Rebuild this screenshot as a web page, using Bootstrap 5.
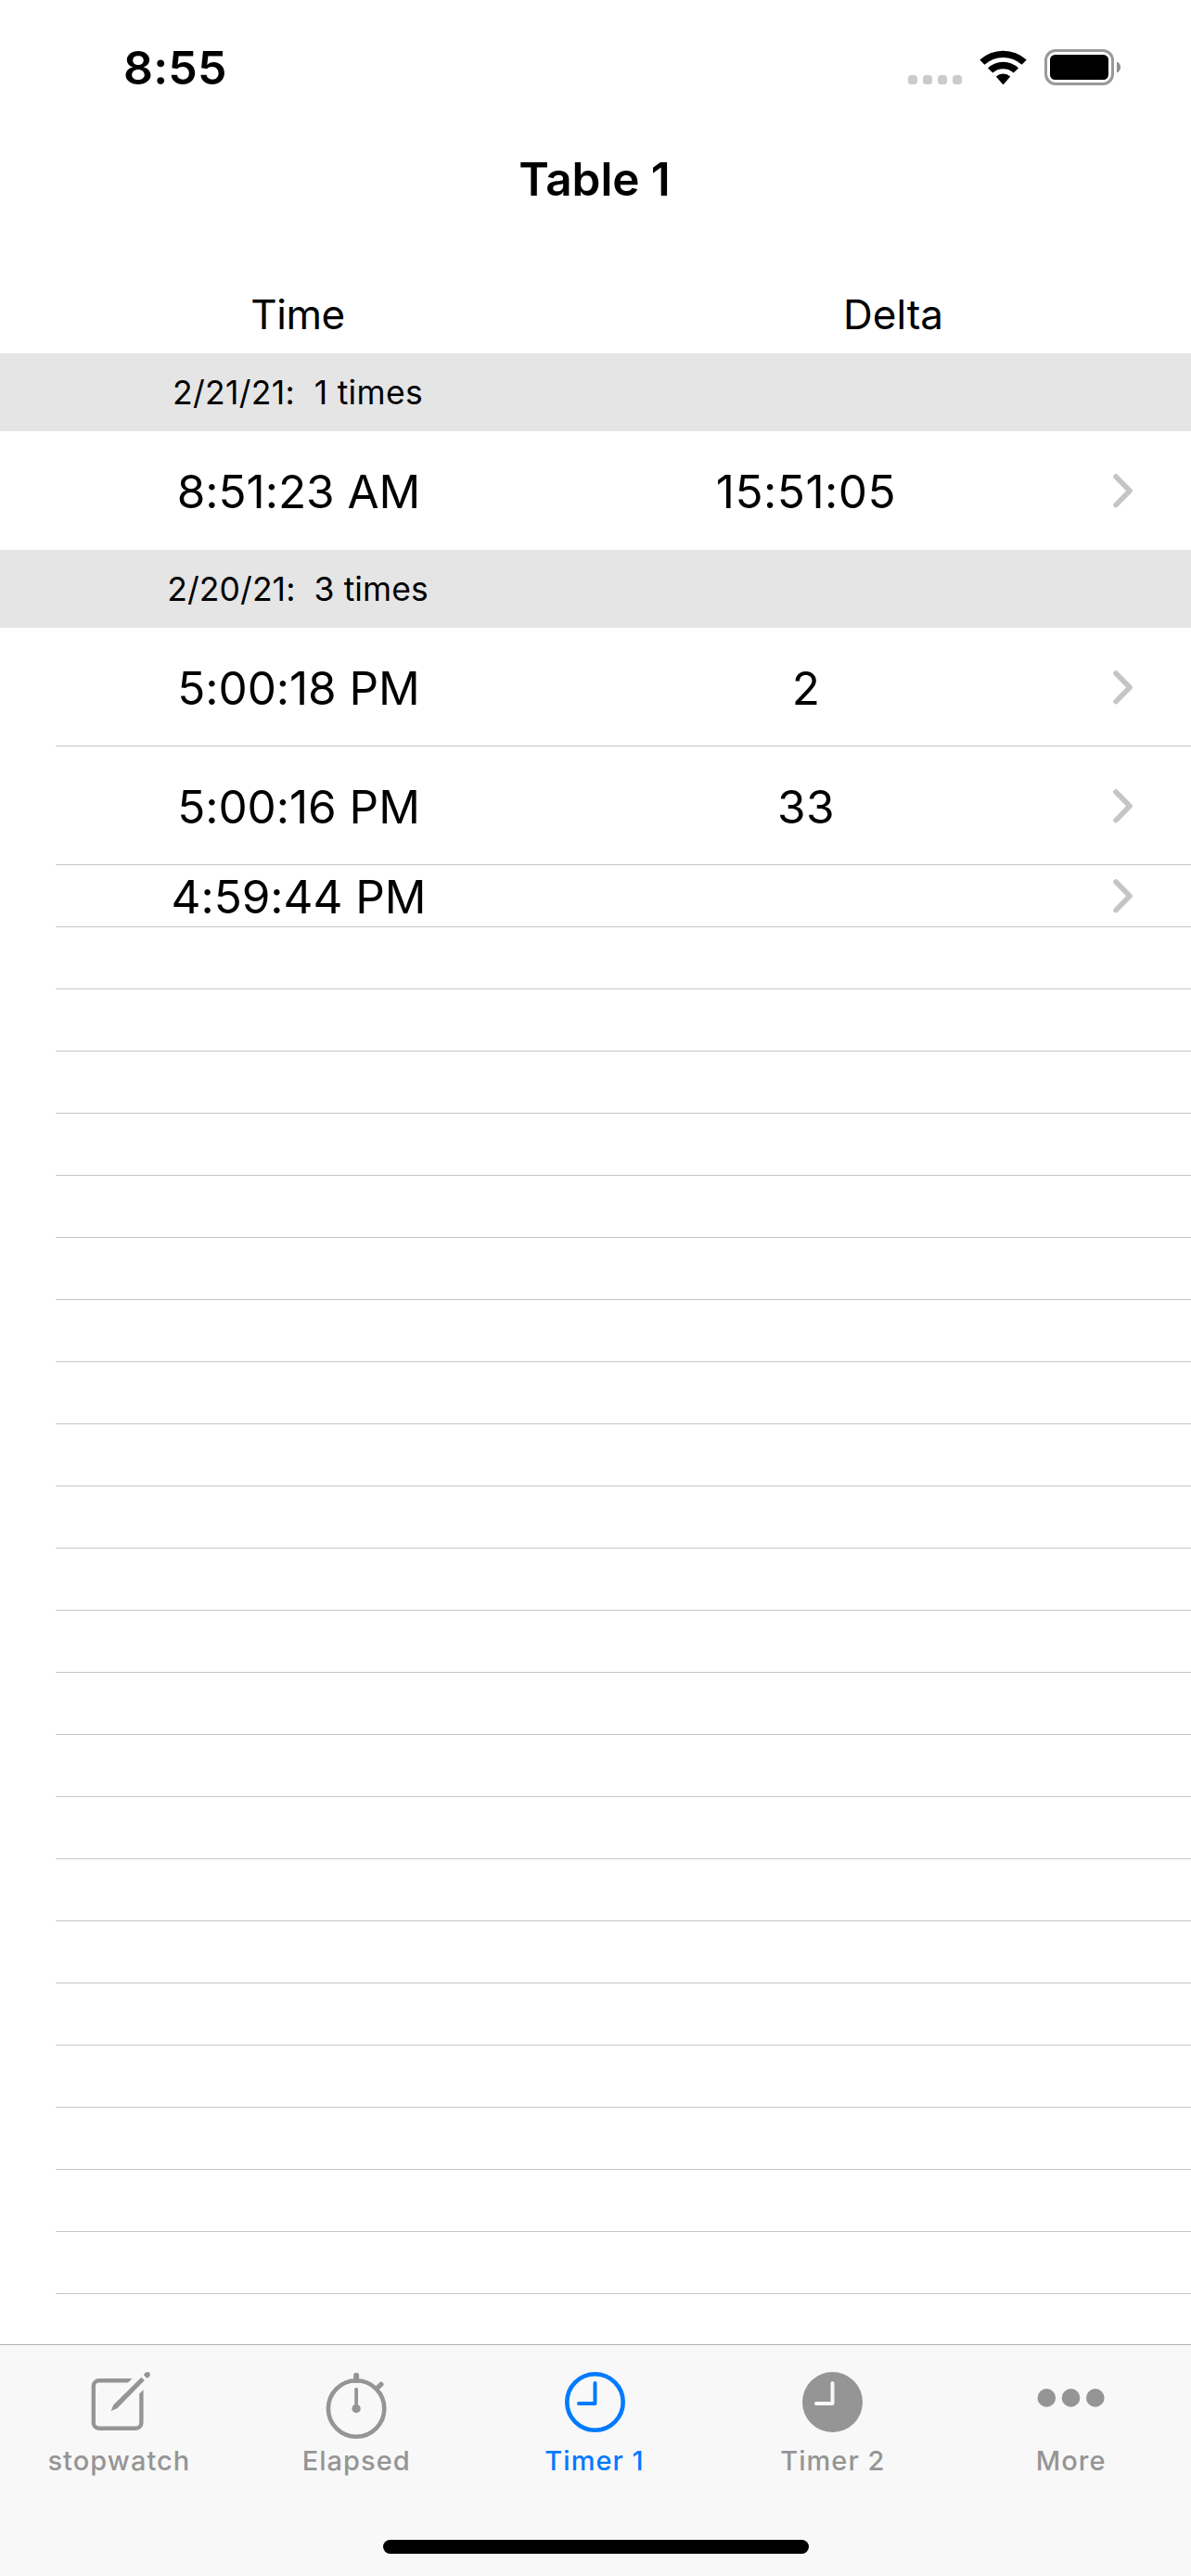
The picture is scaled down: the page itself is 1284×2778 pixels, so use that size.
<!DOCTYPE html>
<html lang="en">
<head>
<meta charset="utf-8">
<meta name="viewport" content="width=device-width, initial-scale=1">
<title>Table 1</title>
<link href="https://cdn.jsdelivr.net/npm/bootstrap@5.3.0/dist/css/bootstrap.min.css" rel="stylesheet">
<style>
  body { font-family: Inter, "Liberation Sans", sans-serif; color: #000; background: #fff; }
  svg { display: block; flex: none; }
  .app-screen { width: 1284px; height: 2778px; }
  .status-bar { height: 132px; padding: 14px 76px 0 133px; }
  .clock-text { font-size: 50px; font-weight: 600; letter-spacing: .2px; }
  .status-icons { margin-top: -3px; }
  .title-bar { height: 132px; padding: 0 2px 10px 0; font-size: 49.5px; font-weight: 600; letter-spacing: -.1px; }
  .column-heads { height: 117px; padding-top: 33px; font-size: 44px; }
  .head-time { letter-spacing: -.5px; }
  .day-band { height: 84px; padding-top: 2px; background: #e5e5e5; font-size: 35.5px; letter-spacing: .3px; white-space: pre; }
  .day-band.snug { letter-spacing: .08px; }
  .time-row { height: 128px; font-size: 49.5px; }
  .time-row.short-row { height: 67px; }
  .time-cell, .delta-cell { padding-top: 2px; }
  .time-cell { padding-left: 2px; letter-spacing: -.05px; }
  .delta-cell { width: 454px; letter-spacing: .5px; }
  .chevron { margin-left: 104px; }
  .ruled { background: linear-gradient(#c6c6c8, #c6c6c8) 60px 100% / 1224px 1px no-repeat; }
  .blank-row { height: 67px; }
  .tab-panel { height: 250px; background: #f8f8f8; border-top: 1px solid #b2b2b2; padding: 27px 0 24px; }
  .tab-link { color: #959595; font-size: 29px; font-weight: 500; letter-spacing: 1.05px; line-height: 36px; }
  .tab-link.active { color: #007aff; }
  .tab-link span { margin: 8px 2px 0 0; }
  .tab-link:first-child span { margin-right: 0; }
  .home-pill { width: 459px; height: 15px; background: #000; }
</style>
<script src="https://cdn.jsdelivr.net/npm/bootstrap@5.3.0/dist/js/bootstrap.bundle.min.js"></script>
</head>
<body>
<svg width="0" height="0" class="position-absolute" aria-hidden="true">
  <symbol id="chev" viewBox="0 0 22 37"><path d="M3 3 L18 18.3 L3 33.6" fill="none" stroke="#c5c5c7" stroke-width="5.6" stroke-linecap="round" stroke-linejoin="round"/></symbol>
</svg>
<div class="app-screen d-flex flex-column overflow-hidden">

  <header>
    <div class="status-bar d-flex align-items-center justify-content-between">
      <span class="clock-text lh-1">8:55</span>
      <svg class="status-icons" width="230" height="44" viewBox="978 50 230 44" aria-hidden="true">
        <g fill="#cbcbcb">
          <rect x="979" y="81" width="10" height="10" rx="3.5"/>
          <rect x="995" y="81" width="10" height="10" rx="3.5"/>
          <rect x="1011" y="81" width="10" height="10" rx="3.5"/>
          <rect x="1027" y="81" width="10" height="10" rx="3.5"/>
        </g>
        <path d="M1056.3 64.6 A37 37 0 0 1 1106.7 64.6 L1101.6 69.7 A30 30 0 0 0 1061.4 69.7 Z"/>
        <path d="M1065 73.4 A24 24 0 0 1 1098 73.4 L1092.7 78.6 A16.5 16.5 0 0 0 1070.3 78.6 Z"/>
        <path d="M1073.8 82.4 A12 12 0 0 1 1089.2 82.4 L1082.6 90.2 Q1081.5 91.6 1080.4 90.2 Z"/>
        <rect x="1127.5" y="54.5" width="72" height="36" rx="10.5" fill="none" stroke="#999" stroke-width="3"/>
        <rect x="1132" y="59" width="63" height="27" rx="5.5"/>
        <path d="M1204 66.5 Q1208 68.3 1208 72.5 Q1208 76.7 1204 78.5 Z" fill="#8e8e8e"/>
      </svg>
    </div>
    <div class="title-bar d-flex align-items-center justify-content-center">Table 1</div>
    <div class="column-heads d-flex align-items-center text-center">
      <span class="w-50 head-time">Time</span>
      <span class="w-50">Delta</span>
    </div>
  </header>

  <main class="flex-grow-1">
    <section>
      <div class="day-band d-flex align-items-center"><span class="w-50 text-center">2/21/21:  1 times</span></div>
      <div class="time-row d-flex align-items-center text-center">
        <span class="time-cell w-50">8:51:23 AM</span><span class="delta-cell">15:51:05</span>
        <svg class="chevron" width="22" height="37"><use href="#chev"/></svg>
      </div>
    </section>
    <section>
      <div class="day-band snug d-flex align-items-center"><span class="w-50 text-center">2/20/21:  3 times</span></div>
      <div class="time-row ruled d-flex align-items-center text-center">
        <span class="time-cell w-50">5:00:18 PM</span><span class="delta-cell">2</span>
        <svg class="chevron" width="22" height="37"><use href="#chev"/></svg>
      </div>
      <div class="time-row ruled d-flex align-items-center text-center">
        <span class="time-cell w-50">5:00:16 PM</span><span class="delta-cell">33</span>
        <svg class="chevron" width="22" height="37"><use href="#chev"/></svg>
      </div>
      <div class="time-row short-row ruled d-flex align-items-center text-center">
        <span class="time-cell w-50">4:59:44 PM</span><span class="delta-cell"></span>
        <svg class="chevron" width="22" height="37"><use href="#chev"/></svg>
      </div>
    </section>
    <div aria-hidden="true">
      <div class="blank-row ruled"></div><div class="blank-row ruled"></div><div class="blank-row ruled"></div>
      <div class="blank-row ruled"></div><div class="blank-row ruled"></div><div class="blank-row ruled"></div>
      <div class="blank-row ruled"></div><div class="blank-row ruled"></div><div class="blank-row ruled"></div>
      <div class="blank-row ruled"></div><div class="blank-row ruled"></div><div class="blank-row ruled"></div>
      <div class="blank-row ruled"></div><div class="blank-row ruled"></div><div class="blank-row ruled"></div>
      <div class="blank-row ruled"></div><div class="blank-row ruled"></div><div class="blank-row ruled"></div>
      <div class="blank-row ruled"></div><div class="blank-row ruled"></div><div class="blank-row ruled"></div>
      <div class="blank-row ruled"></div>
    </div>
  </main>

  <footer class="tab-panel d-flex flex-column align-items-center justify-content-between flex-shrink-0">
    <nav class="nav nav-fill w-100 flex-nowrap">
      <a class="tab-link col d-flex flex-column align-items-center text-decoration-none" href="#">
        <svg width="72" height="72" viewBox="0 0 72 72" aria-hidden="true">
          <rect x="8.8" y="11.2" width="51.6" height="51.6" rx="6" fill="none" stroke="currentColor" stroke-width="4.4"/>
          <path d="M43.6 28 L69.6 2" stroke="#f8f8f8" stroke-width="17.2"/>
          <path d="M27.6 44 L30.3 37.6 L60.3 7.7 L63.9 11.1 L34.3 41.3 Z" fill="currentColor"/>
          <path d="M62.9 5.3 Q64.5 2 67.2 2 Q70.2 2.4 69.9 5.2 Q69.7 7.3 66.3 8.7 Z" fill="currentColor"/>
        </svg>
        <span>stopwatch</span>
      </a>
      <a class="tab-link col d-flex flex-column align-items-center text-decoration-none" href="#">
        <svg width="72" height="72" viewBox="0 0 72 72" fill="none" stroke="currentColor" stroke-linecap="round" class="overflow-visible" aria-hidden="true">
          <circle cx="35.1" cy="41.5" r="30.2" stroke-width="4.6"/>
          <path d="M35.1 5.7 V11" stroke-width="6"/>
          <path d="M57.3 19.6 L61.8 15.4" stroke-width="5.4"/>
          <path d="M35.1 20.6 V40" stroke-width="3.8"/>
          <circle cx="35.1" cy="41.5" r="4.7" fill="currentColor" stroke="none"/>
        </svg>
        <span>Elapsed</span>
      </a>
      <a class="tab-link active col d-flex flex-column align-items-center text-decoration-none" href="#" aria-current="page">
        <svg width="72" height="72" viewBox="0 0 72 72" fill="none" stroke="currentColor" stroke-linecap="round" stroke-linejoin="round" aria-hidden="true">
          <circle cx="35.5" cy="34.5" r="30.2" stroke-width="4.6"/>
          <path d="M35.5 13.9 V36 H18" stroke-width="4"/>
        </svg>
        <span>Timer 1</span>
      </a>
      <a class="tab-link col d-flex flex-column align-items-center text-decoration-none" href="#">
        <svg width="72" height="72" viewBox="0 0 72 72" fill="none" stroke-linecap="round" stroke-linejoin="round" aria-hidden="true">
          <circle cx="34.5" cy="34.5" r="32.5" fill="currentColor"/>
          <path d="M34.5 13.9 V36 H17" stroke="#f8f8f8" stroke-width="4"/>
        </svg>
        <span>Timer 2</span>
      </a>
      <a class="tab-link col d-flex flex-column align-items-center text-decoration-none" href="#">
        <svg width="72" height="72" viewBox="0 0 72 72" fill="currentColor" class="overflow-visible" aria-hidden="true">
          <circle cx="8.3" cy="29.9" r="9.8"/><circle cx="34.5" cy="29.9" r="9.8"/><circle cx="60.8" cy="29.9" r="9.8"/>
        </svg>
        <span>More</span>
      </a>
    </nav>
    <div class="home-pill rounded-pill"></div>
  </footer>
</div>
</body>
</html>
